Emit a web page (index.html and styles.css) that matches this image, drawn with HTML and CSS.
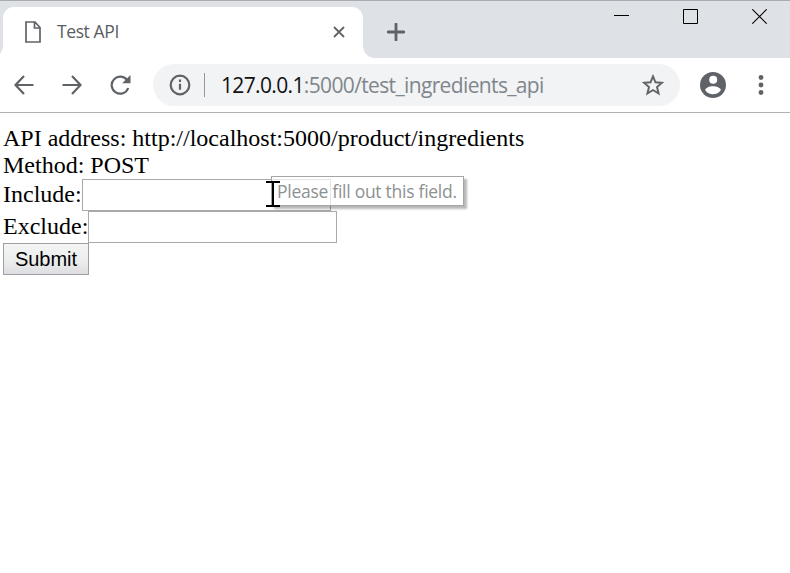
FILE: index.html
```
<!DOCTYPE html>
<html lang="en">
<head>
<meta charset="utf-8">
<title>Test API</title>
<link rel="stylesheet" href="styles.css">
</head>
<body>
<header class="tabstrip">
  <div class="tab">
    <svg class="page-icon" width="16" height="22" viewBox="0 0 16 22"><path d="M1 1h9l5 5.500v14.500H1zM9.500 1v6H15" fill="none" stroke="#5f6368" stroke-width="1.700"/></svg>
    <span class="tab-title">Test API</span>
    <svg class="tab-close" width="12" height="12" viewBox="0 0 12 12"><path d="M1 1l10 10M11 1L1 11" stroke="#5f6368" stroke-width="1.800"/></svg>
    <svg class="foot foot-left" width="12" height="12" viewBox="0 0 12 12"><path d="M12 0v12H0A12 12 0 0 0 12 0" fill="#fff"/></svg>
    <svg class="foot foot-right" width="12" height="12" viewBox="0 0 12 12"><path d="M0 0v12h12A12 12 0 0 1 0 0" fill="#fff"/></svg>
  </div>
  <svg class="new-tab" width="18" height="18" viewBox="0 0 18 18"><path d="M9 1v16M1 9h16" stroke="#5f6368" stroke-width="2.800" stroke-linecap="round"/></svg>
  <div class="window-controls">
    <svg width="15" height="15" viewBox="0 0 15 15"><path d="M0 6.500h15" stroke="#000"/></svg>
    <svg width="15" height="15" viewBox="0 0 15 15"><path d="M.5.500h14v14H.5z" fill="none" stroke="#000"/></svg>
    <svg width="15" height="15" viewBox="0 0 15 15"><path d="M.3.300l14.400 14.400M14.700.300L.3 14.700" stroke="#000" stroke-width="1.100"/></svg>
  </div>
</header>
<nav class="toolbar">
  <svg class="back" width="20" height="20" viewBox="0 0 20 20"><path d="M19.500 10H2M10 1L1.500 10l8.500 9" class="line"/></svg>
  <svg class="forward" width="20" height="20" viewBox="0 0 20 20"><path d="M.5 10H18M10 1l8.500 9-8.500 9" class="line"/></svg>
  <svg class="reload" width="21" height="20" viewBox="0 0 21 20"><path d="M17.300 5.500A8.500 8.500 0 1 0 18.200 13" class="line"/><path d="M20.500 0v8.300H12.200z" fill="#5f6368"/></svg>
  <div class="address">
    <svg width="22" height="22" viewBox="0 0 22 22"><circle cx="11" cy="11" r="9.300" class="line"/><path d="M11 9.700v6M11 5.600v2.400" class="line"/></svg>
    <span class="divider"></span>
    <span class="url"><span class="host">127.0.0.1</span>:5000/test_ingredients_api</span>
    <svg class="star" width="22" height="22" viewBox="0 0 22 22"><path d="M11 2.300l2.500 6 6.500.5-5 4.200 1.600 6.500L11 16l-5.600 3.500L7 13 2 8.800l6.500-.5z" fill="none" stroke="#5f6368" stroke-width="1.900"/></svg>
  </div>
  <svg class="profile" width="26" height="26" viewBox="0 0 26 26"><circle cx="13" cy="13" r="13" fill="#5f6368"/><circle cx="13.200" cy="7.800" r="4" fill="#fff"/><path d="M5.200 18.300c0-2.500 4.500-4 7.800-4s7.800 1.500 7.800 4C19 20.800 16.200 22.300 13 22.300s-6-1.500-7.800-4z" fill="#fff"/></svg>
  <svg class="menu" width="6" height="20" viewBox="0 0 6 20"><g fill="#5f6368"><circle cx="3" cy="2.500" r="2.400"/><circle cx="3" cy="10" r="2.400"/><circle cx="3" cy="17.500" r="2.400"/></g></svg>
</nav>
<main>
  <div>API address: http://localhost:5000/product/ingredients</div>
  <div>Method: POST</div>
  <form>
    <div class="field"><label for="include">Include:</label><input id="include" type="text">
      <div class="tooltip">Please fill out this field.</div>
      <svg class="cursor" width="14" height="26" viewBox="0 0 14 26"><path d="M0 1h5.500M8.500 1H14M0 25h5.500M8.500 25H14M7 1.500v23M5.500 1h3M5.500 25h3" fill="none" stroke="#000" stroke-width="2"/></svg>
    </div>
    <div class="field"><label for="exclude">Exclude:</label><input id="exclude" type="text"></div>
    <button type="button">Submit</button>
  </form>
</main>
</body>
</html>
```
FILE: styles.css
```
* { box-sizing: border-box; }
body { margin: 0; background: #fff; overflow: hidden; }
svg { display: block; flex: none; }
.line { fill: none; stroke: #5f6368; stroke-width: 2.2; }

.tabstrip { display: flex; height: 58px; background: #dee1e6; border-top: 1px solid #a9abae; padding: 6px 0 0 3px; }
.tab { position: relative; display: flex; align-items: center; width: 360px; height: 51px; padding: 0 18px 0 22px; background: #fff; border-radius: 11px 11px 0 0; font-family: "Open Sans", sans-serif; font-size: 17.5px; color: #5a5d62; }
.page-icon { margin: -1px 16px 0 0; }
.tab-title { flex: 1; margin-top: -3px; letter-spacing: -0.4px; }
.tab-close { margin-top: -1px; }
.foot { position: absolute; bottom: 0; }
.foot-left { left: -12px; }
.foot-right { right: -12px; }
.new-tab { margin: 16px 0 0 24px; }
.window-controls { display: flex; gap: 54px; margin: 2px 23px 0 auto; }

.toolbar { display: flex; align-items: center; height: 55px; padding: 0 0 1px 14px; border-bottom: 1px solid #b1b2b5; }
.forward { margin-left: 28px; }
.reload { margin-left: 28px; }
.address { display: flex; align-items: center; width: 527px; height: 42px; margin-left: 22px; padding: 0 16px; border-radius: 21px; background: #f1f3f4; }
.divider { width: 1px; height: 24px; margin: 0 16px 0 13px; background: #96999d; }
.url { flex: 1; white-space: nowrap; font-family: "Open Sans", sans-serif; font-size: 21px; letter-spacing: -0.64px; color: #80868b; }
.host { color: #111; }
.profile { margin-left: 20px; }
.menu { margin-left: 32px; }

main { padding: 12px 3px; font-family: "Liberation Serif", serif; font-size: 24px; line-height: 27px; color: #000; }
.field { position: relative; display: flex; align-items: center; height: 32px; }
.field label { margin-top: -1px; }
.field input { width: 249px; height: 32px; margin: 0; border: 1px solid #a9a9a9; background: #fff; outline: 0; }
.tooltip { position: absolute; left: 268px; top: -3px; width: 193px; height: 30px; padding-left: 5px; border: 1px solid #a5a5a5; background: rgba(255, 255, 255, .7); box-shadow: 3px 3px 2px rgba(0, 0, 0, .28); font: 17.5px/29px "Open Sans", sans-serif; letter-spacing: -0.27px; color: #8c9191; white-space: nowrap; }
.cursor { position: absolute; left: 263px; top: 2px; }
button { display: block; width: 86px; height: 32px; padding: 0; border: 1px solid #a0a0a3; border-radius: 0; background: linear-gradient(#f4f4f4, #ebecec 60%, #dddde1); font: 20px "Liberation Sans", sans-serif; color: #000; }
```
